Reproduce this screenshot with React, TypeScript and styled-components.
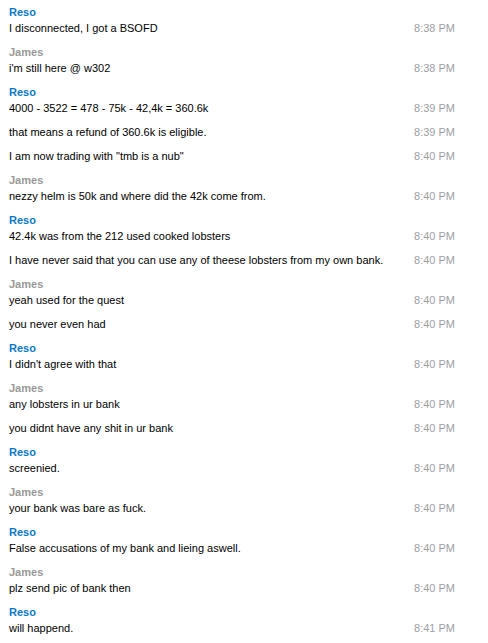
import React from "react";
import styled, { createGlobalStyle } from "styled-components";

type Msg = { text: string; time: string };
type Group = { from: "Reso" | "James"; msgs: Msg[] };

const log: Group[] = [
    { from: "Reso", msgs: [{ text: "I disconnected, I got a BSOFD", time: "8:38 PM" }] },
    { from: "James", msgs: [{ text: "i'm still here @ w302", time: "8:38 PM" }] },
    {
        from: "Reso",
        msgs: [
            { text: "4000 - 3522 = 478 - 75k - 42,4k = 360.6k", time: "8:39 PM" },
            { text: "that means a refund of 360.6k is eligible.", time: "8:39 PM" },
            { text: 'I am now trading with "tmb is a nub"', time: "8:40 PM" },
        ],
    },
    { from: "James", msgs: [{ text: "nezzy helm is 50k and where did the 42k come from.", time: "8:40 PM" }] },
    {
        from: "Reso",
        msgs: [
            { text: "42.4k was from the 212 used cooked lobsters", time: "8:40 PM" },
            { text: "I have never said that you can use any of theese lobsters from my own bank.", time: "8:40 PM" },
        ],
    },
    {
        from: "James",
        msgs: [
            { text: "yeah used for the quest", time: "8:40 PM" },
            { text: "you never even had", time: "8:40 PM" },
        ],
    },
    { from: "Reso", msgs: [{ text: "I didn't agree with that", time: "8:40 PM" }] },
    {
        from: "James",
        msgs: [
            { text: "any lobsters in ur bank", time: "8:40 PM" },
            { text: "you didnt have any shit in ur bank", time: "8:40 PM" },
        ],
    },
    { from: "Reso", msgs: [{ text: "screenied.", time: "8:40 PM" }] },
    { from: "James", msgs: [{ text: "your bank was bare as fuck.", time: "8:40 PM" }] },
    { from: "Reso", msgs: [{ text: "False accusations of my bank and lieing aswell.", time: "8:40 PM" }] },
    { from: "James", msgs: [{ text: "plz send pic of bank then", time: "8:40 PM" }] },
    { from: "Reso", msgs: [{ text: "will happend.", time: "8:41 PM" }] },
];

const App = () => {
    return (
        <>
            <GlobalStyle />
            <Chat>
                {log.map((g, i) => (
                    <Block key={i}>
                        <Sender $me={g.from === "Reso"}>{g.from}</Sender>
                        {g.msgs.map((m, j) => (
                            <Line key={j}>
                                <Text>{m.text}</Text>
                                <Time>{m.time}</Time>
                            </Line>
                        ))}
                    </Block>
                ))}
            </Chat>
        </>
    );
};

export default App;

const GlobalStyle = createGlobalStyle`
    body {
        margin: 0;
        background: #fff;
    }
`;
const Chat = styled.div`
    width: 488px;
    height: 643px;
    overflow: hidden;
    padding: 4px 33px 0 9px;
    box-sizing: border-box;
    font-family: Tahoma, "Liberation Sans", Arial, sans-serif;
    font-size: 11px;
    background: #fff;
`;
const Block = styled.div`
    display: flex;
    flex-direction: column;
`;
const Sender = styled.div<{ $me: boolean }>`
    height: 16px;
    line-height: 16px;
    font-weight: bold;
    color: ${(p) => (p.$me ? "#0a78c8" : "#999999")};
`;
const Line = styled.div`
    display: flex;
    justify-content: space-between;
    height: 16px;
    line-height: 16px;
    margin-bottom: 8px;
    color: #000;
`;
const Text = styled.span``;
const Time = styled.span`
    color: #a0a0a8;
`;
